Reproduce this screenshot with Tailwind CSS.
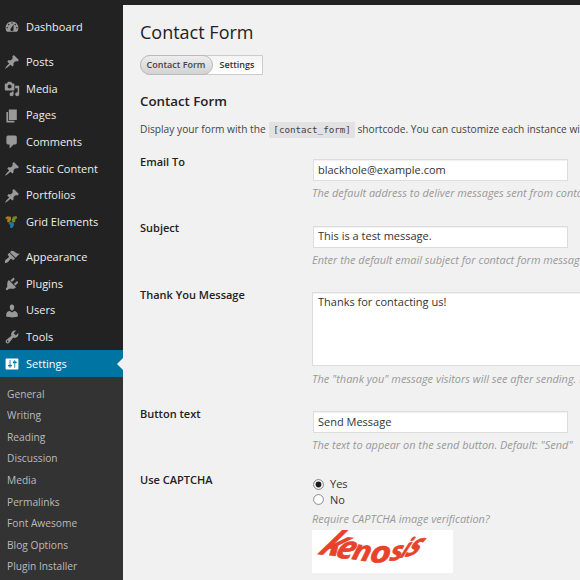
<!doctype html>
<html lang="en">
    <head>
        <meta charset="UTF-8" />
        <meta name="viewport" content="width=device-width, initial-scale=1.0" />
        <title>Contact Form</title>
        <script src="https://cdn.jsdelivr.net/npm/@tailwindcss/browser@4"></script>
    </head>
    <body
        class="flex h-[580px] w-[580px] overflow-hidden bg-[#f1f1f1] font-['Open_Sans',sans-serif] text-[11px] text-[#333]"
    >
        <!-- Admin menu -->
        <nav class="flex h-full w-[123px] shrink-0 flex-col bg-[#222] pt-[14px] text-[#eee]">
            <a class="mb-[8.4px] flex h-[26.65px] shrink-0 items-center gap-1.5 pl-1">
                <svg class="size-4 fill-[#999]" viewBox="0 0 20 20"><path d="M3.76 16h12.48c1.1-1.37 1.76-3.11 1.76-5 0-4.42-3.58-8-8-8s-8 3.58-8 8c0 1.89.66 3.63 1.76 5zM10 4c.55 0 1 .45 1 1s-.45 1-1 1-1-.45-1-1 .45-1 1-1zM6 6c.55 0 1 .45 1 1s-.45 1-1 1-1-.45-1-1 .45-1 1-1zm8 0c.55 0 1 .45 1 1s-.45 1-1 1-1-.45-1-1 .45-1 1-1zm-5.37 5.55L12 7v6c0 1.1-.9 2-2 2s-2-.9-2-2c0-.57.24-1.08.63-1.45zM4 10c.55 0 1 .45 1 1s-.45 1-1 1-1-.45-1-1 .45-1 1-1zm12 0c.55 0 1 .45 1 1s-.45 1-1 1-1-.45-1-1 .45-1 1-1z" /></svg>
                Dashboard
            </a>
            <a class="flex h-[26.65px] shrink-0 items-center gap-1.5 pl-1">
                <svg class="size-4 fill-[#999]" viewBox="0 0 20 20"><path d="M10.44 3.02l1.82-1.82 6.36 6.35-1.83 1.82c-1.05-.68-2.48-.57-3.41.36l-.75.75c-.92.93-1.04 2.35-.35 3.41l-1.83 1.82-2.41-2.41-2.8 2.79c-.42.42-3.38 2.71-3.8 2.29s1.86-3.39 2.28-3.81l2.79-2.79L4.1 9.36l1.83-1.82c1.05.69 2.48.57 3.4-.36l.75-.75c.93-.92 1.05-2.35.36-3.41z" /></svg>
                Posts
            </a>
            <a class="flex h-[26.65px] shrink-0 items-center gap-1.5 pl-1">
                <svg class="size-4 fill-[#999]" viewBox="0 0 20 20"><path d="M13 11V4c0-.55-.45-1-1-1h-1.67L9 1H5L3.67 3H2c-.55 0-1 .45-1 1v7c0 .55.45 1 1 1h10c.55 0 1-.45 1-1zM7 4.5c1.38 0 2.5 1.12 2.5 2.5S8.38 9.5 7 9.5 4.5 8.38 4.5 7 5.62 4.5 7 4.5zM14 6h5v10.5c0 1.38-1.12 2.5-2.5 2.5S14 17.88 14 16.5s1.12-2.5 2.5-2.5c.17 0 .34.02.5.05V9h-3V6zm-4 8.05V13h2v3.5c0 1.38-1.12 2.5-2.5 2.5S7 17.88 7 16.5 8.12 14 9.5 14c.17 0 .34.02.5.05z" /></svg>
                Media
            </a>
            <a class="flex h-[26.65px] shrink-0 items-center gap-1.5 pl-1">
                <svg class="size-4 fill-[#999]" viewBox="0 0 20 20"><path d="M6 15V2h10v13H6zm-1 1h8v2H3V5h2v11z" /></svg>
                Pages
            </a>
            <a class="flex h-[26.65px] shrink-0 items-center gap-1.5 pl-1">
                <svg class="size-4 fill-[#999]" viewBox="0 0 20 20"><path d="M5 2h9c1.1 0 2 .9 2 2v7c0 1.1-.9 2-2 2h-2l-5 5v-5H5c-1.1 0-2-.9-2-2V4c0-1.1.9-2 2-2z" /></svg>
                Comments
            </a>
            <a class="flex h-[26.65px] shrink-0 items-center gap-1.5 pl-1">
                <svg class="size-4 fill-[#999]" viewBox="0 0 20 20"><path d="M10.44 3.02l1.82-1.82 6.36 6.35-1.83 1.82c-1.05-.68-2.48-.57-3.41.36l-.75.75c-.92.93-1.04 2.35-.35 3.41l-1.83 1.82-2.41-2.41-2.8 2.79c-.42.42-3.38 2.71-3.8 2.29s1.86-3.39 2.28-3.81l2.79-2.79L4.1 9.36l1.83-1.82c1.05.69 2.48.57 3.4-.36l.75-.75c.93-.92 1.05-2.35.36-3.41z" /></svg>
                Static Content
            </a>
            <a class="flex h-[26.65px] shrink-0 items-center gap-1.5 pl-1">
                <svg class="size-4 fill-[#999]" viewBox="0 0 20 20"><path d="M10.44 3.02l1.82-1.82 6.36 6.35-1.83 1.82c-1.05-.68-2.48-.57-3.41.36l-.75.75c-.92.93-1.04 2.35-.35 3.41l-1.83 1.82-2.41-2.41-2.8 2.79c-.42.42-3.38 2.71-3.8 2.29s1.86-3.39 2.28-3.81l2.79-2.79L4.1 9.36l1.83-1.82c1.05.69 2.48.57 3.4-.36l.75-.75c.93-.92 1.05-2.35.36-3.41z" /></svg>
                Portfolios
            </a>
            <a class="mb-[8.4px] flex h-[26.65px] shrink-0 items-center gap-1.5 pl-1">
                <svg class="size-4" viewBox="0 0 16 16">
                    <path d="M1 4 3.4 2.2l3.4.6.4 2.6L5.4 8.4 3 8l.6-2.2z" fill="#a87a1c" />
                    <path d="m7.8 5.6 1.2-2.8 3.4-.8.8 2-2 1.4.2 2-2 1.4-1.6-1.2z" fill="#72882f" />
                    <path d="m4.4 9.2 2.4-1.4 3.2 1.6-.2 2.4-1.8 2.4-2-.6.2-2.4z" fill="#1c7aa6" />
                </svg>
                Grid Elements
            </a>
            <a class="flex h-[26.65px] shrink-0 items-center gap-1.5 pl-1">
                <svg class="size-4 fill-[#999]" viewBox="0 0 20 20"><path d="M14.48 11.06L7.41 3.99l1.5-1.5c.5-.56 2.3-.47 3.51.32 1.21.8 1.43 1.28 2.91 2.1 1.18.64 2.45 1.26 4.45.85zm-.71.71L6.7 4.7 4.93 6.47c-.39.39-.39 1.02 0 1.41l1.06 1.06c.39.39.39 1.03 0 1.42-.6.6-1.43 1.11-2.21 1.69-.35.26-.7.53-1.01.84C1.43 14.23.4 16.08 1.4 17.07c.99 1 2.84-.03 4.18-1.36.31-.31.58-.66.85-1.02.57-.78 1.08-1.61 1.69-2.21.39-.39 1.02-.39 1.41 0l1.06 1.06c.39.39 1.02.39 1.41 0z" /></svg>
                Appearance
            </a>
            <a class="flex h-[26.65px] shrink-0 items-center gap-1.5 pl-1">
                <svg class="size-4 fill-[#999]" viewBox="0 0 20 20"><path d="M13.11 4.36L9.87 7.6 8 5.73l3.24-3.24c.35-.34 1.05-.2 1.56.32.52.51.66 1.21.31 1.55zm-8 1.77l.91-1.12 9.01 9.01-1.19.84c-.71.71-2.63 1.16-3.82 1.16H6.14L4.9 17.26c-.59.59-1.54.59-2.12 0-.59-.58-.59-1.53 0-2.12l1.24-1.24v-3.88c0-1.13.4-3.19 1.09-3.89zm7.26 3.97l3.24-3.24c.34-.35 1.04-.21 1.55.31.52.51.66 1.21.31 1.55l-3.24 3.25z" /></svg>
                Plugins
            </a>
            <a class="flex h-[26.65px] shrink-0 items-center gap-1.5 pl-1">
                <svg class="size-4 fill-[#999]" viewBox="0 0 20 20"><path d="M10 9.25c-2.27 0-2.73-3.44-2.73-3.44C7 4.02 7.82 2 9.97 2c2.16 0 2.98 2.02 2.71 3.81 0 0-.41 3.44-2.68 3.44zm0 2.57L12.72 10c2.39 0 4.52 2.33 4.52 4.53v2.49s-3.65 1.13-7.24 1.13c-3.65 0-7.24-1.13-7.24-1.13v-2.49c0-2.25 1.94-4.48 4.47-4.48z" /></svg>
                Users
            </a>
            <a class="flex h-[26.65px] shrink-0 items-center gap-1.5 pl-1">
                <svg class="size-4 fill-[#999]" viewBox="0 0 20 20"><path d="M16.68 9.77c-1.34 1.34-3.3 1.67-4.95.99l-5.41 6.52c-.99.99-2.59.99-3.58 0s-.99-2.59 0-3.57l6.52-5.42c-.68-1.65-.35-3.61.99-4.95 1.28-1.28 3.12-1.62 4.72-1.06l-2.89 2.89 2.82 2.82 2.86-2.87c.53 1.58.18 3.39-1.08 4.65zM3.81 16.21c.4.39 1.04.39 1.43 0 .4-.4.4-1.04 0-1.43-.39-.4-1.03-.4-1.43 0-.39.39-.39 1.03 0 1.43z" /></svg>
                Tools
            </a>
            <a class="flex h-[26.65px] shrink-0 items-center gap-1.5 bg-[#0074a2] pl-1 text-white">
                <svg class="size-4 fill-white" viewBox="0 0 20 20"><path d="M18 16V4c0-.55-.45-1-1-1H3c-.55 0-1 .45-1 1v12c0 .55.45 1 1 1h14c.55 0 1-.45 1-1zM8 11h1c.55 0 1 .45 1 1s-.45 1-1 1H8v1.5c0 .28-.22.5-.5.5s-.5-.22-.5-.5V13H6c-.55 0-1-.45-1-1s.45-1 1-1h1V5.5c0-.28.22-.5.5-.5s.5.22.5.5V11zm5-2h-1c-.55 0-1-.45-1-1s.45-1 1-1h1V5.5c0-.28.22-.5.5-.5s.5.22.5.5V7h1c.55 0 1 .45 1 1s-.45 1-1 1h-1v5.5c0 .28-.22.5-.5.5s-.5-.22-.5-.5V9z" /></svg>
                Settings
                <svg class="ml-auto h-3 w-1.5 fill-[#f1f1f1]" viewBox="0 0 6 12"><path d="M6 0v12L0 6z" /></svg>
            </a>
            <div class="flex grow flex-col bg-[#333] pt-[6.3px] pl-[7px] text-[10.2px] text-[#bbb]">
                <a class="flex h-[21.6px] shrink-0 items-center">General</a>
                <a class="flex h-[21.6px] shrink-0 items-center">Writing</a>
                <a class="flex h-[21.6px] shrink-0 items-center">Reading</a>
                <a class="flex h-[21.6px] shrink-0 items-center">Discussion</a>
                <a class="flex h-[21.6px] shrink-0 items-center">Media</a>
                <a class="flex h-[21.6px] shrink-0 items-center">Permalinks</a>
                <a class="flex h-[21.6px] shrink-0 items-center">Font Awesome</a>
                <a class="flex h-[21.6px] shrink-0 items-center">Blog Options</a>
                <a class="flex h-[21.6px] shrink-0 items-center">Plugin Installer</a>
            </div>
        </nav>

        <main class="min-w-0 grow overflow-hidden border-t-[5px] border-[#222] pl-[17px] whitespace-nowrap">
            <h1 class="mt-[14px] h-[26px] text-[18px] leading-[26px] text-[#222]">Contact Form</h1>

            <div class="mt-[10px] flex h-5 w-[123px] rounded-l-full border border-[#ccc] bg-linear-to-b from-[#f4f4f4] to-white text-[9px] font-semibold">
                <span class="-my-px -ml-px flex w-[73px] items-center justify-center rounded-full border border-[#bbb] bg-linear-to-b from-[#eee] to-[#d2d2d2] pr-px text-[#444]">Contact Form</span>
                <span class="flex grow items-center justify-center pr-px">Settings</span>
            </div>

            <h2 class="mt-4 h-5 text-[13.3px] leading-5 font-semibold text-[#222]">Contact Form</h2>
            <p class="mt-[9px] h-[18px] text-[10.2px] leading-[18px] text-[#444]">
                Display your form with the
                <code class="ml-px inline-block h-4 bg-[#e2e2e2] px-1 font-['DejaVu_Sans_Mono',monospace] text-[9.2px] leading-4">[contact_form]</code>
                shortcode. You can customize each instance with shortcode attributes.
            </p>

            <form class="mt-[14px]">
                <div class="flex h-[66.5px]">
                    <label class="w-[173px] shrink-0 leading-5 font-semibold text-[#222]">Email To</label>
                    <div>
                        <input type="text" value="blackhole@example.com" class="mt-[7px] block h-[22px] w-[255px] border border-[#ddd] bg-white px-1 pb-0.5 text-[11px] shadow-[inset_0_1px_1px_rgba(0,0,0,0.06)]" />
                        <p class="mt-1 -ml-px text-[10.95px] leading-4 text-[#999] italic">The default address to deliver messages sent from contact forms.</p>
                    </div>
                </div>
                <div class="flex h-[66.5px]">
                    <label class="-mt-px w-[173px] shrink-0 leading-5 font-semibold text-[#222]">Subject</label>
                    <div>
                        <input type="text" value="This is a test message." class="mt-[7px] block h-[22px] w-[255px] border border-[#ddd] bg-white px-1 pb-0.5 text-[11px] shadow-[inset_0_1px_1px_rgba(0,0,0,0.06)]" />
                        <p class="mt-1 -ml-px text-[10.95px] leading-4 text-[#999] italic">Enter the default email subject for contact form messages.</p>
                    </div>
                </div>
                <div class="flex h-[119px]">
                    <label class="w-[172px] shrink-0 leading-5 font-semibold text-[#222]">Thank You Message</label>
                    <div>
                        <textarea class="mt-[7px] block h-[74px] w-[400px] resize-none border border-[#ddd] bg-white px-[5px] py-px text-[11px] leading-4 shadow-[inset_0_1px_1px_rgba(0,0,0,0.06)]">Thanks for contacting us!</textarea>
                        <p class="mt-[5px] text-[10.95px] leading-4 text-[#999] italic">The "thank you" message visitors will see after sending. Basic HTML allowed.</p>
                    </div>
                </div>
                <div class="flex h-[66.5px]">
                    <label class="w-[173px] shrink-0 leading-5 font-semibold text-[#222]">Button text</label>
                    <div>
                        <input type="text" value="Send Message" class="mt-[7px] block h-[22px] w-[255px] border border-[#ddd] bg-white px-1 pb-0.5 text-[11px] shadow-[inset_0_1px_1px_rgba(0,0,0,0.06)]" />
                        <p class="mt-1 -ml-px text-[10.95px] leading-4 text-[#999] italic">The text to appear on the send button. Default: "Send"</p>
                    </div>
                </div>
                <div class="flex">
                    <label class="-mt-px w-[172px] shrink-0 leading-5 font-semibold text-[#222]">Use CAPTCHA</label>
                    <div class="pt-[6px]">
                        <div class="flex h-[15.5px] items-center gap-1.5 pl-px">
                            <svg class="size-[11px]" viewBox="0 0 11 11"><circle cx="5.5" cy="5.5" r="4.9" fill="#fff" stroke="#777" /><circle cx="5.5" cy="5.5" r="2.9" fill="#1a1a1a" /></svg>
                            Yes
                        </div>
                        <div class="flex h-[15.5px] items-center gap-1.5 pl-px">
                            <svg class="size-[11px]" viewBox="0 0 11 11"><circle cx="5.5" cy="5.5" r="4.9" fill="#fff" stroke="#888" /></svg>
                            No
                        </div>
                        <p class="mt-[3px] text-[10.95px] leading-4 text-[#999] italic">Require CAPTCHA image verification?</p>
                        <!-- captcha sample: every letter is skewed on its own -->
                        <svg class="mt-[3px] h-[43px] w-[141px] bg-white" viewBox="0 0 141 43" font-family="Open Sans, sans-serif" font-weight="700" font-style="italic" fill="#e8432a" stroke="#e8432a" stroke-width="0.6">
                            <text font-size="36" transform="translate(5 24) rotate(6) skewX(-32)">k</text>
                            <text font-size="32" transform="translate(22 27) rotate(8) skewX(-16)">e</text>
                            <text font-size="28" transform="translate(39 29) rotate(8) skewX(-6) scale(1.1 1)">n</text>
                            <text font-size="29" transform="translate(57 33) rotate(-3) skewX(-10) scale(1.25 1)">o</text>
                            <text font-size="25" transform="translate(77 31) rotate(-8) skewX(-20) scale(1.1 1)">s</text>
                            <text font-size="23" transform="translate(87 28) rotate(-12) skewX(-38)">i</text>
                            <text font-size="26" transform="translate(92 27) rotate(-12) skewX(-42) scale(1.15 1)">s</text>
                        </svg>
                    </div>
                </div>
            </form>
        </main>
    </body>
</html>
